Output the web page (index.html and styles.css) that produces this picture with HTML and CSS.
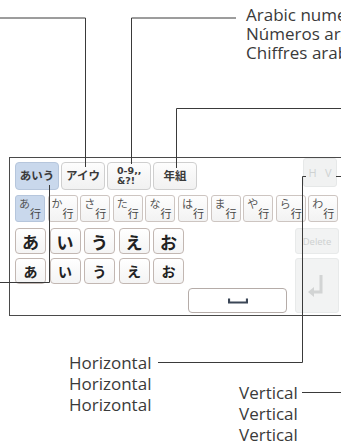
FILE: index.html
```html
<!DOCTYPE html>
<html lang="ja">
<head>
<meta charset="utf-8">
<link rel="stylesheet" href="styles.css">
</head>
<body>
<div class="canvas">
  <div class="keyboard">
    <div class="tabs">
      <div class="tab sel">あいう</div>
      <div class="tab">アイウ</div>
      <div class="tab num"><span>0-9,,</span><span>&amp;?!</span></div>
      <div class="tab">年組</div>
      <div class="hv">H&nbsp;&nbsp;&nbsp;V</div>
    </div>
    <div class="gyo">
      <div class="gkey sel"><span class="kana">あ</span><span class="row">行</span></div>
      <div class="gkey"><span class="kana">か</span><span class="row">行</span></div>
      <div class="gkey"><span class="kana">さ</span><span class="row">行</span></div>
      <div class="gkey"><span class="kana">た</span><span class="row">行</span></div>
      <div class="gkey"><span class="kana">な</span><span class="row">行</span></div>
      <div class="gkey"><span class="kana">は</span><span class="row">行</span></div>
      <div class="gkey"><span class="kana">ま</span><span class="row">行</span></div>
      <div class="gkey"><span class="kana">や</span><span class="row">行</span></div>
      <div class="gkey"><span class="kana">ら</span><span class="row">行</span></div>
      <div class="gkey"><span class="kana">わ</span><span class="row">行</span></div>
    </div>
    <div class="lower">
      <div class="krow big">
        <div class="ckey">あ</div><div class="ckey">い</div><div class="ckey">う</div><div class="ckey">え</div><div class="ckey">お</div>
      </div>
      <div class="del">Delete</div>
      <div class="krow small">
        <div class="ckey">あ</div><div class="ckey">い</div><div class="ckey">う</div><div class="ckey">え</div><div class="ckey">お</div>
      </div>
      <div class="enter">
        <svg width="20" height="26" viewBox="0 0 20 26"><path d="M14 2 V19 H5" fill="none" stroke="#d2d4d4" stroke-width="3"/><path d="M7 14 L1 19 L7 24 Z" fill="#d2d4d4"/></svg>
      </div>
      <div class="space">
        <svg width="20" height="6" viewBox="0 0 20 6"><path d="M1 0.5 V4.5 H19 V0.5" fill="none" stroke="#3b4656" stroke-width="2.2"/></svg>
      </div>
    </div>
  </div>

  <svg class="leaders" width="341" height="441" viewBox="0 0 341 441">
    <g fill="none" stroke="#3a3a3a" stroke-width="1">
      <polyline points="0,18 85.5,18 85.5,167"/>
      <polyline points="236,18 131.5,18 131.5,164"/>
      <polyline points="341,108.5 176.5,108.5 176.5,168"/>
      <polyline points="49.5,185 49.5,282.5 0,282.5"/>
      <polyline points="158,362.5 302.5,362.5 302.5,176.5 306,176.5"/>
      <polyline points="336,176.5 341,176.5"/>
      <polyline points="302,392.5 341,392.5"/>
    </g>
  </svg>

  <div class="label arabic">Arabic numerals<br>Números arábigos<br>Chiffres arabes</div>
  <div class="label horiz">Horizontal<br>Horizontal<br>Horizontal</div>
  <div class="label vert">Vertical<br>Vertical<br>Vertical</div>
</div>
</body>
</html>
```

FILE: styles.css
```css
html, body {
  margin: 0;
  padding: 0;
  background: #fff;
}

.canvas {
  position: relative;
  width: 341px;
  height: 441px;
  overflow: hidden;
  background: #fff;
  font-family: "Noto Sans CJK JP", "Noto Sans", sans-serif;
}

.keyboard {
  box-sizing: border-box;
  margin: 157px 0 0 9px;
  width: 360px;
  height: 159px;
  border: 1px solid #4a4a4a;
  border-right: none;
  padding: 0 0 0 5px;
  background: #fff;
}

.tabs {
  display: flex;
  align-items: flex-start;
  gap: 2px;
}

.tab {
  box-sizing: border-box;
  margin-top: 4px;
  width: 44px;
  height: 28px;
  border: 1px solid #cfcfcf;
  border-radius: 4px;
  background: linear-gradient(#fdfdfd, #f1f1f1);
  display: flex;
  align-items: center;
  justify-content: center;
  font-size: 11.5px;
  font-weight: 700;
  color: #3a3a3a;
  line-height: 1;
}

.tab.sel {
  background: #c9d8ec;
  border-color: #b6c6dc;
}

.tab.num {
  flex-direction: column;
  font-family: "DejaVu Sans", sans-serif;
  font-size: 9.5px;
  line-height: 10px;
  align-items: flex-start;
  padding-left: 9px;
}

.hv {
  box-sizing: border-box;
  margin-left: 104px;
  width: 34px;
  height: 29px;
  border: 1px solid #e6e8e8;
  border-radius: 3px;
  background: #f1f2f2;
  color: #cfd2d2;
  font-family: "Open Sans", sans-serif;
  font-size: 11px;
  display: flex;
  align-items: center;
  justify-content: center;
}

.gyo {
  display: flex;
  gap: 2.6px;
  margin-top: 5px;
}

.gkey {
  position: relative;
  box-sizing: border-box;
  width: 30px;
  height: 27px;
  border: 1px solid #cdc5c1;
  border-radius: 3px;
  background: linear-gradient(#fefefe, #f2f2f2);
}

.gkey.sel {
  background: #c9d8ec;
  border-color: #b6c6dc;
}

.gkey .kana {
  position: absolute;
  left: 3px;
  top: 1px;
  font-size: 11px;
  line-height: 12px;
  color: #555;
}

.gkey .row {
  position: absolute;
  right: 3px;
  bottom: 2px;
  font-size: 11px;
  line-height: 12px;
  color: #444;
}

.lower {
  display: grid;
  grid-template-columns: 173px 107px 44px;
  grid-template-rows: 26px 26px 25px;
  row-gap: 4px;
  margin-top: 6px;
}

.krow {
  display: flex;
  gap: 3.5px;
}

.ckey {
  box-sizing: border-box;
  width: 31px;
  height: 100%;
  border: 1px solid #c2b7b2;
  border-radius: 4px;
  background: linear-gradient(#fff, #f4f4f4);
  display: flex;
  align-items: center;
  justify-content: center;
  font-weight: 700;
  color: #222;
  line-height: 1;
}

.big .ckey { font-size: 17px; }
.small .ckey { font-size: 14px; }

.big { grid-column: 1; grid-row: 1; }
.small { grid-column: 1; grid-row: 2; }

.del {
  grid-column: 3;
  grid-row: 1;
  box-sizing: border-box;
  border: 1px solid #e8eaea;
  border-radius: 3px;
  background: #f2f3f3;
  color: #cdd0d0;
  font-family: "Open Sans", sans-serif;
  font-size: 9.5px;
  display: flex;
  align-items: center;
  justify-content: center;
}

.enter {
  grid-column: 3;
  grid-row: 2 / 4;
  box-sizing: border-box;
  border: 1px solid #e8eaea;
  border-radius: 3px;
  background: #f2f3f3;
  display: flex;
  align-items: center;
  justify-content: center;
}

.space {
  grid-column: 2;
  grid-row: 3;
  box-sizing: border-box;
  width: 99px;
  border: 1px solid #b5aca8;
  border-radius: 4px;
  background: #fff;
  display: flex;
  align-items: center;
  justify-content: center;
}

.leaders {
  position: absolute;
  left: 0;
  top: 0;
  pointer-events: none;
}

.label {
  position: absolute;
  font-family: "Open Sans", sans-serif;
  font-size: 17px;
  line-height: 19px;
  color: #3a3a3a;
  white-space: nowrap;
}

.arabic { left: 246px; top: 5px; }
.horiz { left: 69px; top: 352px; line-height: 21px; }
.vert { left: 239px; top: 382px; line-height: 21px; }
```
